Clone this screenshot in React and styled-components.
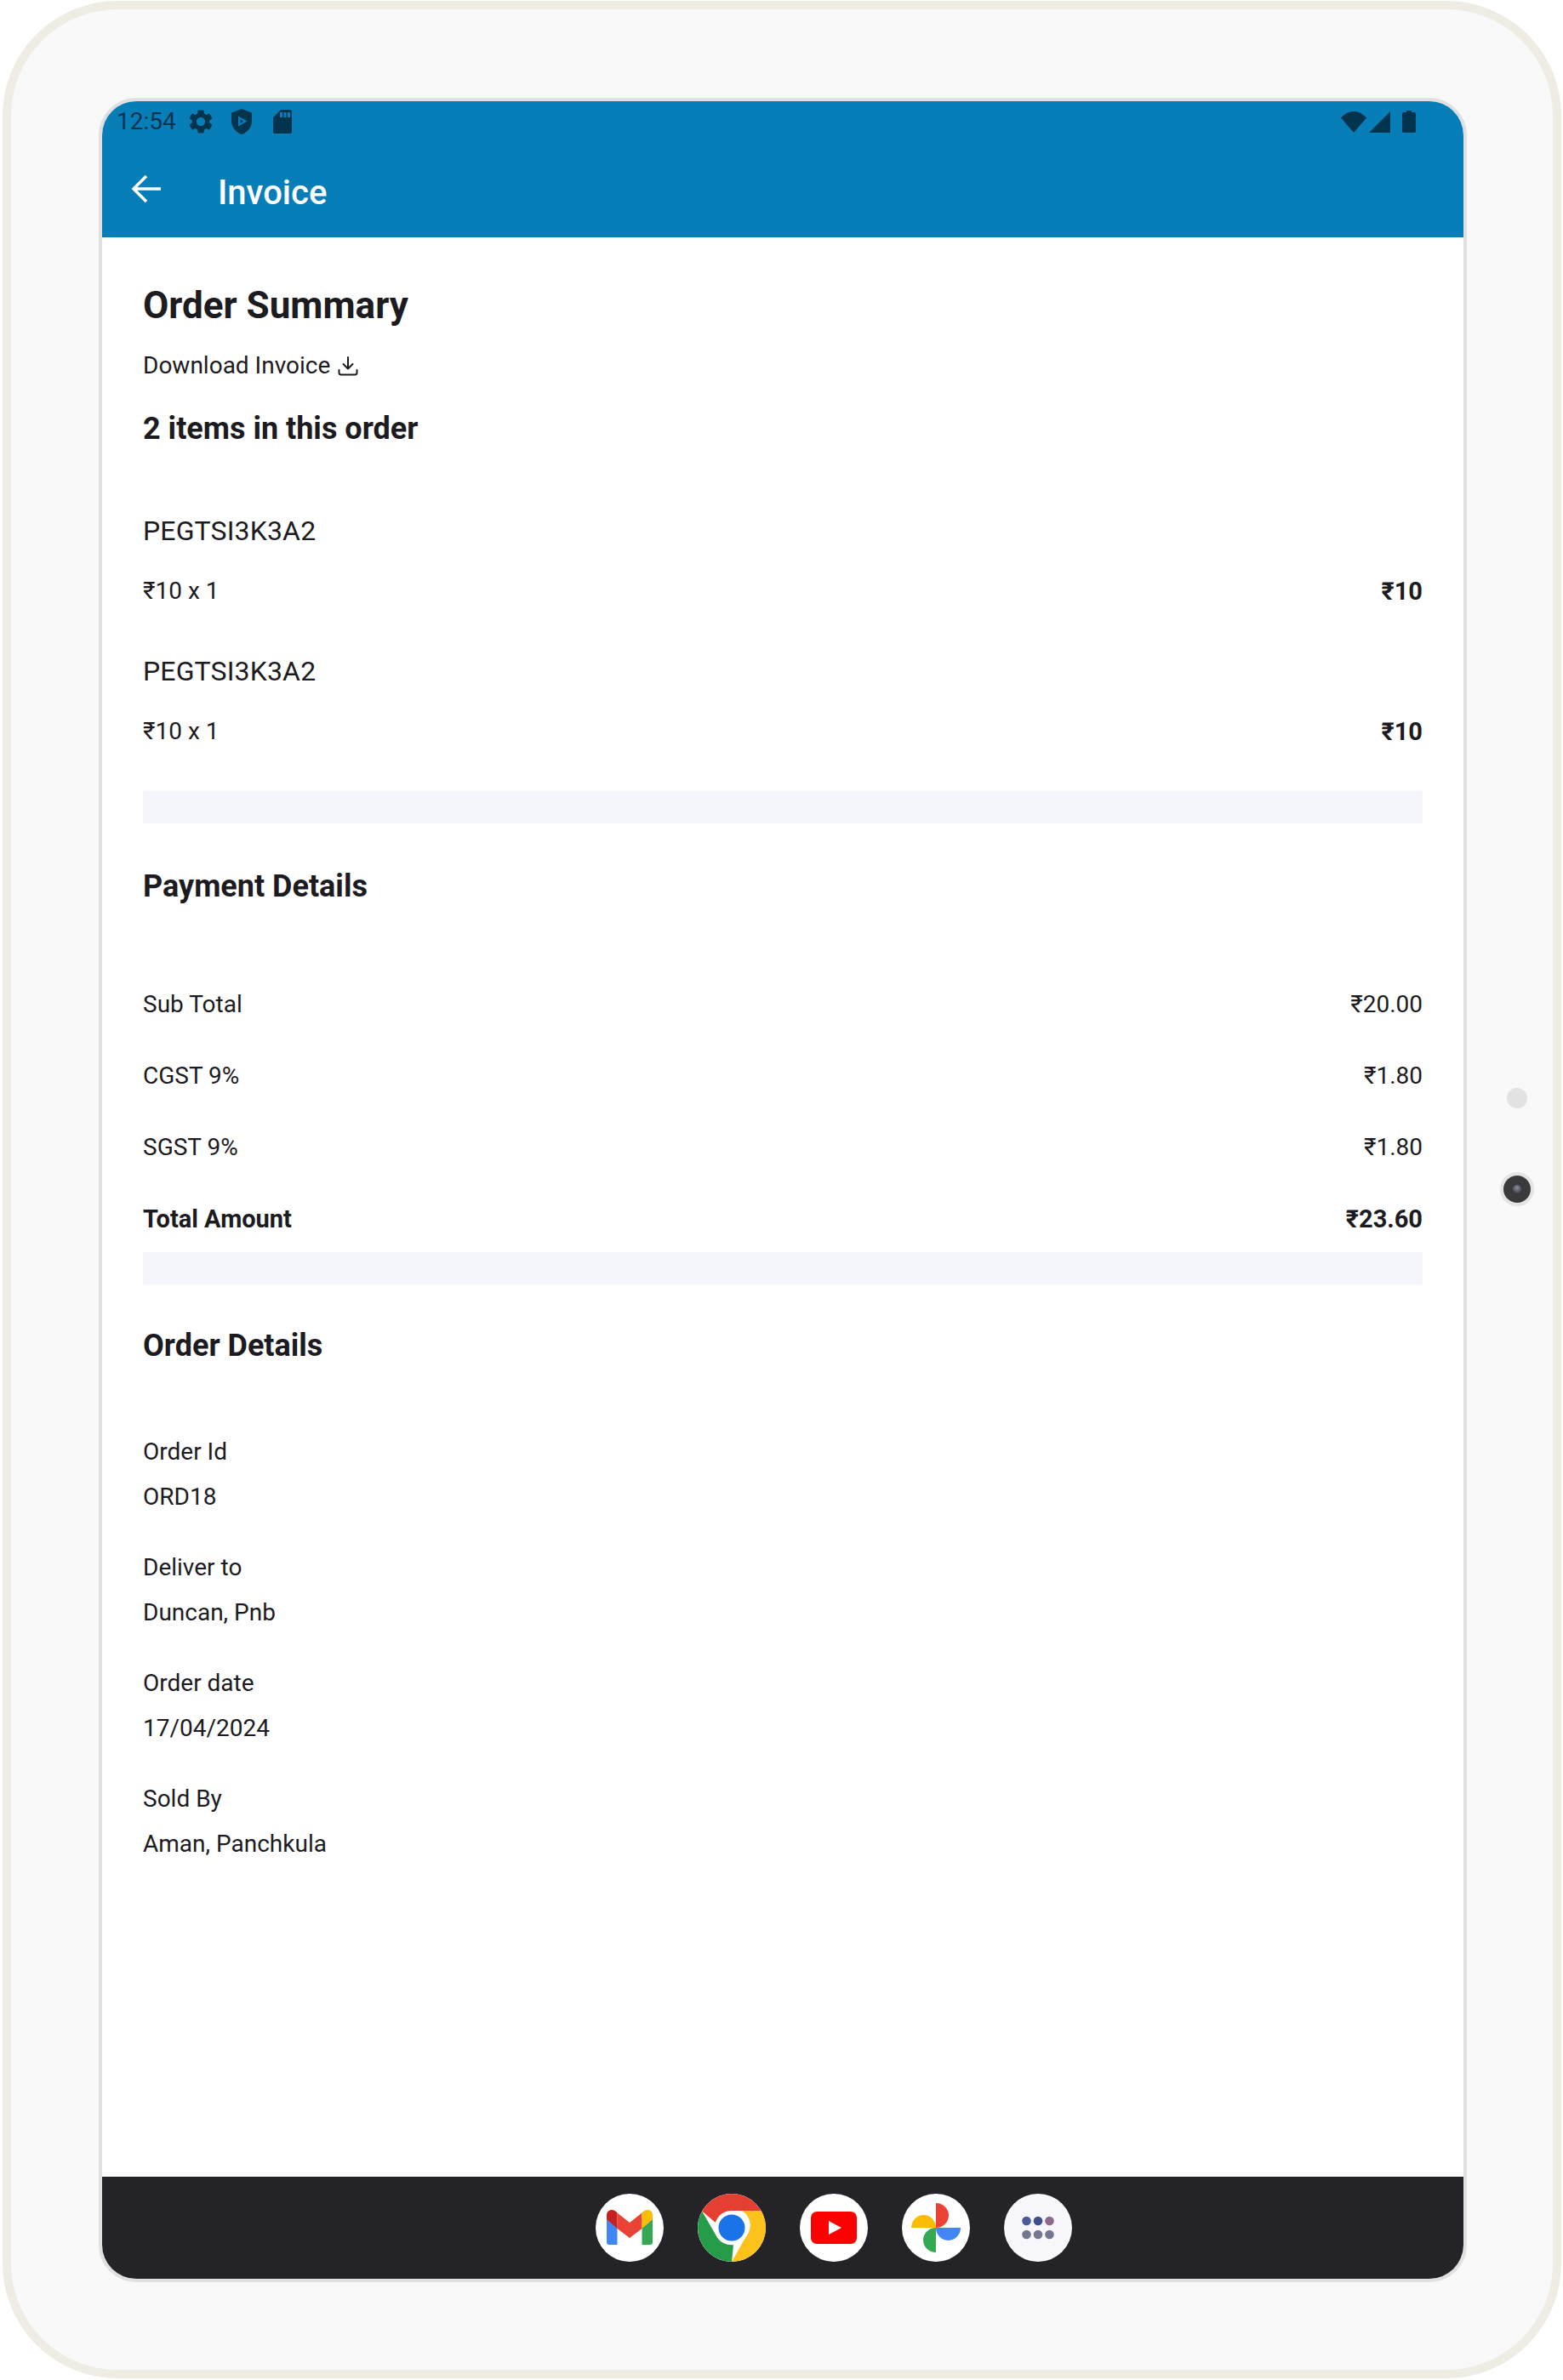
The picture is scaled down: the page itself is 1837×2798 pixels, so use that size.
import React from 'react'
import styled, { createGlobalStyle } from 'styled-components'

const Global = createGlobalStyle`
  html, body { margin: 0; padding: 0; background: #fff; }
  body { font-family: Roboto, "Liberation Sans", sans-serif; color: #1c1b1f; }
  * { box-sizing: border-box; }
`

const Page = styled.div`
  width: 1837px;
  height: 2798px;
  padding: 1px 2px 2px 3px;
`
const Device = styled.div`
  position: relative;
  width: 100%;
  height: 100%;
  background: #f9f9f9;
  border: 10px solid #efece3;
  border-radius: 135px;
  padding: 104px 0 0 103px;
`
const SideButton = styled.div`
  position: absolute;
  left: 1758px;
  top: 1268px;
  width: 24px;
  height: 24px;
  border-radius: 50%;
  background: #e2e2e2;
`
const Camera = styled.div`
  position: absolute;
  left: 1750px;
  top: 1367px;
  width: 40px;
  height: 40px;
  border-radius: 50%;
  background: #3a3a3c;
  border: 4px solid #e4e4e4;
  display: flex;
  align-items: center;
  justify-content: center;
  &::after {
    content: '';
    width: 10px;
    height: 10px;
    border-radius: 50%;
    background: radial-gradient(circle at 50% 35%, #8a8a9a, #2b3038);
  }
`
const Screen = styled.div`
  width: 1608px;
  height: 2568px;
  border: 4px solid #e0e0e0;
  border-radius: 44px;
  background: #fff;
  overflow: hidden;
  display: flex;
  flex-direction: column;
`
const AppBar = styled.header`
  background: #087eb8;
  height: 160px;
  flex: none;
`
const StatusBar = styled.div`
  height: 48px;
  display: flex;
  align-items: center;
  padding: 0 56px 0 17px;
  color: #03344d;
  font-size: 28px;
`
const StatusTime = styled.span`
  width: 68px;
  margin-right: 7px;
  line-height: 48px;
`
const StatusIcons = styled.div`
  display: flex;
  align-items: center;
`
const StatusSlot = styled.span`
  width: 48px;
  display: flex;
  justify-content: center;
`
const SignalSlot = styled.span`
  display: flex;
  margin: 0 14px 0 3px;
`
const Spacer = styled.div`
  flex: 1;
`
const Toolbar = styled.div`
  height: 112px;
  display: flex;
  align-items: center;
  padding: 6px 0 0 32px;
  color: #fff;
`
const BackIcon = styled.svg`
  width: 40px;
  height: 40px;
  margin-right: 64px;
  margin-top: -8px;
`
const ToolbarTitle = styled.h1`
  margin: 0;
  font-size: 40px;
  font-weight: 500;
`
const Content = styled.main`
  flex: 1;
  padding: 0 48px;
  min-height: 0;
`
const Title = styled.h2`
  margin: 0;
  padding-top: 54px;
  font-size: 44px;
  line-height: 52px;
  font-weight: 700;
  color: #1c1b1f;
`
const DownloadLink = styled.div`
  display: flex;
  align-items: center;
  gap: 9px;
  margin-top: 27px;
  font-size: 28px;
  line-height: 36px;
`
const SectionTitle = styled.h3`
  margin: ${p => p.$top}px 0 0;
  font-size: 36px;
  line-height: 44px;
  font-weight: 700;
  color: #1c1b1f;
`
const ItemName = styled.div`
  margin-top: ${p => p.$top}px;
  font-size: 32px;
  line-height: 40px;
  letter-spacing: 0.15px;
`
const Row = styled.div`
  display: flex;
  justify-content: space-between;
  align-items: center;
  margin-top: ${p => p.$top}px;
  font-size: ${p => (p.$bold ? 29 : 28)}px;
  line-height: 36px;
  font-weight: ${p => (p.$bold ? 700 : 400)};
`
const Price = styled.span`
  font-weight: ${p => (p.$bold ? 700 : 400)};
  font-size: ${p => (p.$bold ? 29 : 28)}px;
`
const Band = styled.div`
  height: 38px;
  margin-top: ${p => p.$top}px;
  background: #f5f6fb;
`
const Detail = styled.div`
  margin-top: ${p => p.$top}px;
  font-size: 28px;
  line-height: 36px;
`
const DetailValue = styled.div`
  margin-top: 17px;
`
const Dock = styled.nav`
  height: 120px;
  flex: none;
  background: #242428;
  display: flex;
  align-items: center;
  justify-content: center;
  gap: 40px;
  padding-left: 120px;
`
const DockIcon = styled.div`
  width: 80px;
  height: 80px;
  border-radius: 50%;
  background: ${p => p.$bg || '#fff'};
  overflow: hidden;
  svg { display: block; }
`

const GearIcon = () => (
  <svg width="34" height="34" viewBox="0 0 24 24" fill="currentColor">
    <path d="M19.14 12.94c.04-.3.06-.61.06-.94 0-.32-.02-.64-.07-.94l2.03-1.58c.18-.14.23-.41.12-.61l-1.92-3.32c-.12-.22-.37-.29-.59-.22l-2.39.96c-.5-.38-1.03-.7-1.62-.94l-.36-2.54c-.04-.24-.24-.41-.48-.41h-3.84c-.24 0-.43.17-.47.41l-.36 2.54c-.59.24-1.13.57-1.62.94l-2.39-.96c-.22-.08-.47 0-.59.22L2.74 8.87c-.12.21-.08.47.12.61l2.03 1.58c-.05.3-.09.63-.09.94s.02.64.07.94l-2.03 1.58c-.18.14-.23.41-.12.61l1.92 3.32c.12.22.37.29.59.22l2.39-.96c.5.38 1.03.7 1.62.94l.36 2.54c.05.24.24.41.48.41h3.84c.24 0 .44-.17.47-.41l.36-2.54c.59-.24 1.13-.56 1.62-.94l2.39.96c.22.08.47 0 .59-.22l1.92-3.32c.12-.22.07-.47-.12-.61l-2.01-1.58zM12 15.6c-1.98 0-3.6-1.62-3.6-3.6s1.62-3.6 3.6-3.6 3.6 1.62 3.6 3.6-1.62 3.6-3.6 3.6z" />
  </svg>
)

const ShieldIcon = () => (
  <svg width="24" height="30" viewBox="0 0 24 30">
    <path fill="currentColor" d="M12 0 24 4.5V14c0 7.5-5 13.500-12 16C5 27.500 0 21.500 0 14V4.500z" />
    <path fill="#087eb8" d="M8 8.500 18.500 14.500 8 20.500z" />
    <path fill="currentColor" d="M10.500 12.300 14 14.500 10.500 16.700z" />
  </svg>
)

const SdIcon = () => (
  <svg width="22" height="28" viewBox="0 0 22 28">
    <path fill="currentColor" d="M9 0h11a2 2 0 0 1 2 2v24a2 2 0 0 1-2 2H2a2 2 0 0 1-2-2V9z" />
    <path fill="#087eb8" d="M8 3h3v6H8zM12.500 3h3v6h-3zM17 3h3v6h-3z" />
  </svg>
)

const WifiIcon = () => (
  <svg width="30" height="25" viewBox="0 0 30 25">
    <path fill="currentColor" d="M0 7.500C4 3 9 0 15 0s11 3 15 7.500L15 25z" />
  </svg>
)

const SignalIcon = () => (
  <svg width="25" height="25" viewBox="0 0 25 25">
    <path fill="currentColor" d="M25 0v25H0z" />
  </svg>
)

const BatteryIcon = () => (
  <svg width="16" height="26" viewBox="0 0 16 26">
    <path fill="currentColor" d="M5 0h6v2h3.500A1.500 1.500 0 0 1 16 3.500v21a1.500 1.500 0 0 1-1.500 1.500h-13A1.500 1.500 0 0 1 0 24.500v-21A1.500 1.500 0 0 1 1.500 2H5z" />
  </svg>
)

const DownloadIcon = () => (
  <svg width="24" height="24" viewBox="0 0 24 24" fill="none" stroke="#1c1b1f" strokeWidth="2" strokeLinecap="round" strokeLinejoin="round">
    <path d="M12 2v13M6.500 10l5.500 5.500L17.500 10M1.500 17v3a2.500 2.500 0 0 0 2.500 2.500h16a2.500 2.500 0 0 0 2.500-2.500v-3" />
  </svg>
)

const GmailIcon = () => (
  <svg width="80" height="80" viewBox="0 0 80 80">
    <path fill="#4285f4" d="M13 30v27a3 3 0 0 0 3 3h9.500V35z" />
    <path fill="#34a853" d="M54.500 40v20H64a3 3 0 0 0 3-3V30z" />
    <path fill="#c5221f" d="M13 25c0-6 7-8 11-4l1.500 1.500V41L13 30z" />
    <path fill="#ea4335" d="M25.500 22.500 40 34l14.500-11.500V41L40 52 25.500 41z" />
    <path fill="#fbbc04" d="M54.500 22.500 56 21c4-4 11-2 11 4v5L54.500 41z" />
  </svg>
)

const ChromeIcon = () => (
  <svg width="80" height="80" viewBox="0 0 80 80">
    <circle cx="40" cy="40" r="40" fill="#fff" />
    <path fill="#e53f31" d="M5 20.500A40 40 0 0 1 75 20H40a20 20 0 0 0-19 14z" />
    <path fill="#279c48" d="M5 20.500 21 48a20 20 0 0 0 21 12L40 80A40 40 0 0 1 5 20.500z" />
    <path fill="#fcc21b" d="M75 20A40 40 0 0 1 40 80l17-30a20 20 0 0 0-5-30z" />
    <circle cx="40" cy="40" r="20" fill="#fff" />
    <circle cx="40" cy="40" r="15.500" fill="#1a73e8" />
  </svg>
)

const YoutubeIcon = () => (
  <svg width="80" height="80" viewBox="0 0 80 80">
    <rect x="13" y="21" width="54" height="38" rx="7" fill="#ff0000" />
    <path fill="#fff" d="M34 32 49 40 34 48z" />
  </svg>
)

const PhotosIcon = () => (
  <svg width="80" height="80" viewBox="0 0 80 80">
    <path fill="#ea4335" d="M40 11a15 14.500 0 0 1 0 29z" />
    <path fill="#4285f4" d="M69 40a14.500 15 0 0 1-29 0z" />
    <path fill="#34a853" d="M40 69a15 14.500 0 0 1 0-29z" />
    <path fill="#fbbc04" d="M11 40a14.500 15 0 0 1 29 0z" />
  </svg>
)

const dots = [
  [26.500, 32, '#4a5c96'], [40, 32, '#3f4f8c'], [53.500, 32, '#8b6a8c'],
  [26.500, 48, '#737790'], [40, 48, '#737790'], [53.500, 48, '#737790'],
]

const AppsIcon = () => (
  <svg width="80" height="80" viewBox="0 0 80 80">
    {dots.map(([x, y, c]) => <circle key={x + '-' + y} cx={x} cy={y} r="5.300" fill={c} />)}
  </svg>
)

export default function App() {
  return (
    <Page>
      <Global />
      <Device>
        <SideButton />
        <Camera />
        <Screen>
          <AppBar>
            <StatusBar>
              <StatusTime>12:54</StatusTime>
              <StatusIcons>
                <StatusSlot><GearIcon /></StatusSlot>
                <StatusSlot><ShieldIcon /></StatusSlot>
                <StatusSlot><SdIcon /></StatusSlot>
              </StatusIcons>
              <Spacer />
              <StatusIcons>
                <WifiIcon />
                <SignalSlot><SignalIcon /></SignalSlot>
                <BatteryIcon />
              </StatusIcons>
            </StatusBar>
            <Toolbar>
              <BackIcon viewBox="0 0 40 40" fill="none" stroke="#fff" strokeWidth="3.500">
                <path d="M37 20H6M20 5 5 20l15 15" />
              </BackIcon>
              <ToolbarTitle>Invoice</ToolbarTitle>
            </Toolbar>
          </AppBar>
          <Content>
            <Title>Order Summary</Title>
            <DownloadLink>Download Invoice <DownloadIcon /></DownloadLink>
            <SectionTitle $top={34}>2 items in this order</SectionTitle>
            <ItemName $top={78}>PEGTSI3K3A2</ItemName>
            <Row $top={33}><span>₹10 x 1</span><Price $bold>₹10</Price></Row>
            <ItemName $top={56}>PEGTSI3K3A2</ItemName>
            <Row $top={33}><span>₹10 x 1</span><Price $bold>₹10</Price></Row>
            <Band $top={52} />
            <SectionTitle $top={52}>Payment Details</SectionTitle>
            <Row $top={99}><span>Sub Total</span><Price>₹20.00</Price></Row>
            <Row $top={48}><span>CGST 9%</span><Price>₹1.80</Price></Row>
            <Row $top={48}><span>SGST 9%</span><Price>₹1.80</Price></Row>
            <Row $top={48} $bold><span>Total Amount</span><Price $bold>₹23.60</Price></Row>
            <Band $top={21} />
            <SectionTitle $top={50}>Order Details</SectionTitle>
            <Detail $top={85}>Order Id<DetailValue>ORD18</DetailValue></Detail>
            <Detail $top={47}>Deliver to<DetailValue>Duncan, Pnb</DetailValue></Detail>
            <Detail $top={47}>Order date<DetailValue>17/04/2024</DetailValue></Detail>
            <Detail $top={47}>Sold By<DetailValue>Aman, Panchkula</DetailValue></Detail>
          </Content>
          <Dock>
            <DockIcon><GmailIcon /></DockIcon>
            <DockIcon><ChromeIcon /></DockIcon>
            <DockIcon><YoutubeIcon /></DockIcon>
            <DockIcon><PhotosIcon /></DockIcon>
            <DockIcon $bg="#f8f7fc"><AppsIcon /></DockIcon>
          </Dock>
        </Screen>
      </Device>
    </Page>
  )
}
